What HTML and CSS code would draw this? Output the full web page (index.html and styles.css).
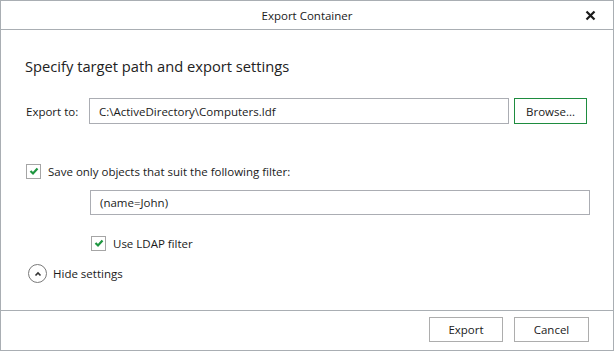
FILE: index.html
```html
<!DOCTYPE html>
<html>
<head>
<meta charset="utf-8">
<link rel="stylesheet" href="styles.css">
</head>
<body>
<div class="dialog">
  <div class="titlebar">
    <span class="title">Export Container</span>
    <span class="close">
      <svg width="11" height="11" viewBox="0 0 11 11"><path d="M1.5 1.5 L9.5 9.5 M9.5 1.5 L1.5 9.5" stroke="#1a1a1a" stroke-width="2.2" fill="none"/></svg>
    </span>
  </div>
  <div class="content">
    <div class="heading">Specify target path and export settings</div>
    <div class="export-row">
      <span class="label">Export to:</span>
      <div class="input">C:\ActiveDirectory\Computers.ldf</div>
      <div class="btn btn-browse">Browse...</div>
    </div>
    <div class="check-row">
      <span class="checkbox"><svg width="12" height="12" viewBox="0 0 12 12"><path d="M2.5 6 L5 8.5 L9.5 3.5" stroke="#1e9640" stroke-width="2.2" fill="none"/></svg></span>
      <span class="check-label">Save only objects that suit the following filter:</span>
    </div>
    <div class="input filter">(name=John)</div>
    <div class="check-row ldap">
      <span class="checkbox"><svg width="12" height="12" viewBox="0 0 12 12"><path d="M2.5 6 L5 8.5 L9.5 3.5" stroke="#1e9640" stroke-width="2.2" fill="none"/></svg></span>
      <span class="check-label">Use LDAP filter</span>
    </div>
    <div class="toggle-row">
      <span class="circle"><svg width="10" height="10" viewBox="0 0 10 10"><path d="M2.5 6.5 L5 4 L7.5 6.5" stroke="#333" stroke-width="1.6" fill="none"/></svg></span>
      <span class="toggle-label">Hide settings</span>
    </div>
  </div>
  <div class="footer">
    <div class="btn btn-export">Export</div>
    <div class="btn btn-cancel">Cancel</div>
  </div>
</div>
</body>
</html>
```
FILE: styles.css
```css
html, body {
  margin: 0;
  padding: 0;
  background: #ffffff;
}
body {
  font-family: "Open Sans", "Noto Sans", sans-serif;
  font-size: 11.5px;
  color: #1a1a1a;
}
.dialog {
  width: 614px;
  height: 351px;
  box-sizing: border-box;
  border: 1px solid #a9aeb3;
  display: flex;
  flex-direction: column;
}
.titlebar {
  height: 28px;
  flex: none;
  border-bottom: 1px solid #a9aeb3;
  display: flex;
  align-items: center;
  justify-content: center;
  position: relative;
}
.title {
  font-size: 11.5px;
  color: #1a1a1a;
}
.close {
  position: absolute;
  right: 17px;
  top: 9px;
  width: 11px;
  height: 11px;
  display: flex;
}
.content {
  flex: 1;
  padding: 26px 26px 0 24px;
  display: flex;
  flex-direction: column;
}
.heading {
  font-size: 14.7px;
  line-height: 20px;
  height: 20px;
  color: #222;
}
.export-row {
  margin-top: 22px;
  display: flex;
  align-items: center;
  height: 26px;
}
.label {
  width: 64px;
  padding-left: 1px;
  box-sizing: border-box;
}
.input {
  box-sizing: border-box;
  border: 1px solid #abadb3;
  height: 26px;
  display: flex;
  align-items: center;
  padding-left: 9px;
}
.export-row .input {
  flex: 1;
}
.btn {
  box-sizing: border-box;
  border: 1px solid #adadad;
  height: 26px;
  display: flex;
  align-items: center;
  justify-content: center;
}
.btn-browse {
  width: 73px;
  margin-left: 5px;
  border: 1px solid #1e8c3f;
}
.check-row {
  margin-top: 39px;
  height: 16px;
  display: flex;
  align-items: center;
  padding-left: 1px;
}
.checkbox {
  width: 15px;
  height: 15px;
  box-sizing: border-box;
  border: 1px solid #a5a5a5;
  display: flex;
  align-items: center;
  justify-content: center;
}
.check-label {
  margin-left: 7px;
}
.filter {
  margin-top: 11px;
  margin-left: 65px;
  margin-right: -3px;
  height: 25px;
}
.check-row.ldap {
  margin-top: 20px;
  padding-left: 66px;
}
.toggle-row {
  margin-top: 13px;
  height: 19px;
  display: flex;
  align-items: center;
  padding-left: 3px;
}
.circle {
  width: 19px;
  height: 19px;
  box-sizing: border-box;
  border: 1px solid #7a7a7a;
  border-radius: 50%;
  display: flex;
  align-items: center;
  justify-content: center;
}
.toggle-label {
  margin-left: 6px;
}
.footer {
  flex: none;
  height: 33px;
  border-top: 1px solid #a9aeb3;
  display: flex;
  justify-content: flex-end;
  align-items: flex-start;
  padding: 6px 24px 0 0;
  gap: 11px;
}
.footer .btn {
  height: 25px;
}
.btn-export {
  width: 74px;
}
.btn-cancel {
  width: 75px;
}
```
